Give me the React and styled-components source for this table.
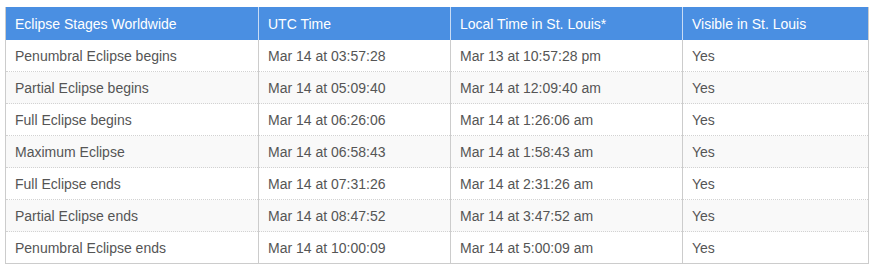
import React from "react";
import styled, { createGlobalStyle } from "styled-components";

const rows = [
  ["Penumbral Eclipse begins", "Mar 14 at 03:57:28", "Mar 13 at 10:57:28 pm", "Yes"],
  ["Partial Eclipse begins", "Mar 14 at 05:09:40", "Mar 14 at 12:09:40 am", "Yes"],
  ["Full Eclipse begins", "Mar 14 at 06:26:06", "Mar 14 at 1:26:06 am", "Yes"],
  ["Maximum Eclipse", "Mar 14 at 06:58:43", "Mar 14 at 1:58:43 am", "Yes"],
  ["Full Eclipse ends", "Mar 14 at 07:31:26", "Mar 14 at 2:31:26 am", "Yes"],
  ["Partial Eclipse ends", "Mar 14 at 08:47:52", "Mar 14 at 3:47:52 am", "Yes"],
  ["Penumbral Eclipse ends", "Mar 14 at 10:00:09", "Mar 14 at 5:00:09 am", "Yes"],
];

const headers = [
  "Eclipse Stages Worldwide",
  "UTC Time",
  "Local Time in St. Louis*",
  "Visible in St. Louis",
];

const widths = [253, 192, 232, 186];

const GlobalStyle = createGlobalStyle`
  body {
    margin: 0;
    background: #fff;
    font-family: "Liberation Sans", Arial, sans-serif;
  }
`;

const Page = styled.div`
  padding: 7px 4px 0 5px;
`;

const Table = styled.table`
  width: 863px;
  border-collapse: collapse;
  table-layout: fixed;
  border: 1px solid #cccccc;
  border-top: none;
  font-size: 14px;
`;

const HeadCell = styled.th`
  height: 33px;
  padding: 0 9px;
  background: #4a8fe2;
  color: #ffffff;
  font-weight: normal;
  text-align: left;
  vertical-align: middle;
  border-left: 1px solid #c8dcf5;
  &:first-child {
    border-left: none;
  }
`;

const Row = styled.tr`
  background: ${(p) => (p.$striped ? "#f9f9f9" : "#ffffff")};
  &:first-child td {
    border-top: none;
  }
`;

const Cell = styled.td`
  height: 31px;
  padding: 0 9px;
  color: #555555;
  vertical-align: middle;
  border-left: 1px solid #cccccc;
  border-top: 1px dotted #d2d2d2;
  white-space: nowrap;
`;

export default function App() {
  return (
    <Page>
      <GlobalStyle />
      <Table>
        <colgroup>
          {widths.map((w, i) => (
            <col key={i} style={{ width: w }} />
          ))}
        </colgroup>
        <thead>
          <tr>
            {headers.map((h) => (
              <HeadCell key={h}>{h}</HeadCell>
            ))}
          </tr>
        </thead>
        <tbody>
          {rows.map((r, i) => (
            <Row key={i} $striped={i % 2 === 1}>
              {r.map((c, j) => (
                <Cell key={j}>{c}</Cell>
              ))}
            </Row>
          ))}
        </tbody>
      </Table>
    </Page>
  );
}
